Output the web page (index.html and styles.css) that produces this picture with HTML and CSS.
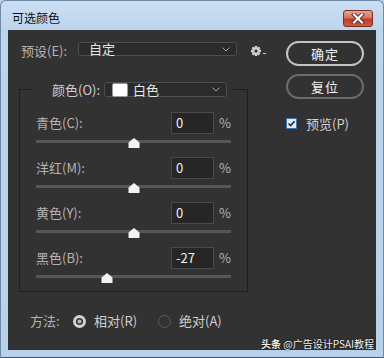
FILE: index.html
```html
<!DOCTYPE html>
<html lang="zh-CN">
<head>
<meta charset="utf-8">
<title>可选颜色</title>
<link rel="stylesheet" href="styles.css">
</head>
<body>
<div class="window">
  <div class="titlebar">
    <span class="title">可选颜色</span>
    <span class="close">
      <svg width="14" height="11" viewBox="0 0 14 11">
        <path d="M3 1.5 L11 9.5 M11 1.5 L3 9.5" stroke="#5a2a24" stroke-width="4" stroke-linecap="square"/>
        <path d="M3 1.5 L11 9.5 M11 1.5 L3 9.5" stroke="#ffffff" stroke-width="2.2" stroke-linecap="square"/>
      </svg>
    </span>
  </div>
  <div class="client">
    <div class="main">
      <div class="preset-row">
        <span class="preset-lbl">预设(E):</span>
        <div class="select preset-select">
          <span class="sel-text">自定</span>
          <svg class="chev" width="8" height="5" viewBox="0 0 8 5"><path d="M0.5 0.5 L4 4 L7.5 0.5" fill="none" stroke="#a8a8a8" stroke-width="1"/></svg>
        </div>
        <svg class="gear" width="16" height="12" viewBox="0 0 16 12">
          <g transform="translate(5,6)" fill="#cfcfcf">
            <circle r="3.7"/>
            <rect x="-1.2" y="-5" width="2.4" height="10"/>
            <rect x="-1.2" y="-5" width="2.4" height="10" transform="rotate(45)"/>
            <rect x="-1.2" y="-5" width="2.4" height="10" transform="rotate(90)"/>
            <rect x="-1.2" y="-5" width="2.4" height="10" transform="rotate(135)"/>
            <circle r="1.6" fill="#323232"/>
          </g>
          <rect x="12" y="8" width="3" height="1" fill="#cfcfcf"/>
        </svg>
      </div>

      <fieldset class="group">
        <legend>
          <div class="legend-in">
            <span class="legend-lbl">颜色(O):</span>
            <div class="select color-select">
              <span class="swatch"></span>
              <span class="sel-text">白色</span>
              <svg class="chev" width="8" height="5" viewBox="0 0 8 5"><path d="M0.5 0.5 L4 4 L7.5 0.5" fill="none" stroke="#a8a8a8" stroke-width="1"/></svg>
            </div>
          </div>
        </legend>

        <div class="row">
          <span class="row-lbl">青色(C):</span>
          <span class="num">0</span>
          <span class="pct">%</span>
        </div>
        <div class="track"><svg class="thumb" style="left:50%" width="12" height="10" viewBox="0 0 12 10"><polygon points="6,0 11.5,4.5 11.5,10 0.5,10 0.5,4.5" fill="#f2f2f2"/></svg></div>

        <div class="row">
          <span class="row-lbl">洋红(M):</span>
          <span class="num">0</span>
          <span class="pct">%</span>
        </div>
        <div class="track"><svg class="thumb" style="left:50%" width="12" height="10" viewBox="0 0 12 10"><polygon points="6,0 11.5,4.5 11.5,10 0.5,10 0.5,4.5" fill="#f2f2f2"/></svg></div>

        <div class="row">
          <span class="row-lbl">黄色(Y):</span>
          <span class="num">0</span>
          <span class="pct">%</span>
        </div>
        <div class="track"><svg class="thumb" style="left:50%" width="12" height="10" viewBox="0 0 12 10"><polygon points="6,0 11.5,4.5 11.5,10 0.5,10 0.5,4.5" fill="#f2f2f2"/></svg></div>

        <div class="row">
          <span class="row-lbl">黑色(B):</span>
          <span class="num">-27</span>
          <span class="pct">%</span>
        </div>
        <div class="track last"><svg class="thumb" style="left:36.5%" width="12" height="10" viewBox="0 0 12 10"><polygon points="6,0 11.5,4.5 11.5,10 0.5,10 0.5,4.5" fill="#f2f2f2"/></svg></div>
      </fieldset>

      <div class="method-row">
        <span class="method-lbl">方法:</span>
        <svg class="radio" width="13" height="13" viewBox="0 0 13 13">
          <circle cx="6.5" cy="6.5" r="6.5" fill="#d4d4d4"/>
          <circle cx="6.5" cy="6.5" r="3.6" fill="#343434"/>
          <circle cx="6.5" cy="6.5" r="2" fill="#bcbcbc"/>
        </svg>
        <span class="radio-lbl first">相对(R)</span>
        <svg class="radio" width="13" height="13" viewBox="0 0 13 13">
          <circle cx="6.5" cy="6.5" r="6" fill="none" stroke="#5c5c5c" stroke-width="1"/>
        </svg>
        <span class="radio-lbl">绝对(A)</span>
      </div>
    </div>

    <div class="side">
      <div class="btn primary">确定</div>
      <div class="btn secondary">复位</div>
      <div class="check-row">
        <svg class="check" width="11" height="11" viewBox="0 0 11 11">
          <rect x="0.5" y="0.5" width="10" height="10" fill="#dfe8f3" stroke="#3b78b8"/>
          <path d="M2.5 5.5 L4.6 7.6 L8.6 3.2" fill="none" stroke="#1f2a36" stroke-width="1.6"/>
        </svg>
        <span class="check-lbl">预览(P)</span>
      </div>
    </div>

    <div class="watermark"><b>头条</b> @广告设计PSAI教程</div>
  </div>
</div>
</body>
</html>
```

FILE: styles.css
```css
* {
  box-sizing: border-box;
}

body {
  margin: 0;
  background: #b9d1ea;
  font-family: "Noto Sans CJK SC", "Noto Sans", sans-serif;
}

.window {
  width: 384px;
  height: 358px;
  border: 1px solid #6f8aa8;
  border-bottom-color: #3c5670;
  border-radius: 6px 6px 0 0;
  background: linear-gradient(180deg, #cbdff3 0, #bcd4ec 30px, #b9d1ea 100%);
  display: flex;
  flex-direction: column;
}

.titlebar {
  height: 29px;
  display: flex;
  justify-content: space-between;
  align-items: flex-start;
  padding: 0 10px 0 11px;
}

.title {
  font-size: 12px;
  line-height: 14px;
  margin-top: 10px;
  color: #111;
}

.close {
  width: 30px;
  height: 17px;
  margin-top: 9px;
  border: 1px solid #7a2d22;
  border-radius: 3px;
  background: linear-gradient(180deg, #e8a594 0, #d5725c 45%, #bf3e25 55%, #cc5a40 100%);
  display: flex;
  align-items: center;
  justify-content: center;
}

.client {
  margin: 0 7px;
  height: 320px;
  background: #323232;
  display: flex;
  position: relative;
  color: #b4b4b4;
  font-size: 13px;
}

.main {
  width: 278px;
  flex: none;
}

/* preset row */
.preset-row {
  margin-top: 12px;
  height: 14px;
  display: flex;
  align-items: flex-start;
}

.preset-lbl {
  width: 57px;
  margin-left: 13px;
  margin-top: 1px;
  line-height: 16px;
  flex: none;
}

.select {
  display: flex;
  align-items: center;
  border: 1px solid #4e4e4e;
  border-radius: 3px;
  background: #2b2b2b;
  color: #e6e6e6;
  font-size: 13px;
  flex: none;
}

.preset-select {
  width: 159px;
  height: 14px;
  padding: 0 6px 0 10px;
}

.sel-text {
  line-height: 12px;
  flex: 1;
}

.chev {
  flex: none;
}

.gear {
  flex: none;
  margin: 3px 0 0 14px;
}

/* group box */
.group {
  margin: 26px 0 0 11px;
  width: 229px;
  min-width: 0;
  padding: 15px 0 13px 12px;
  border: 1px solid #1e1e1e;
}

.group legend {
  padding: 0 5px 0 20px;
  margin: 0;
}

.legend-in {
  display: flex;
  align-items: center;
  height: 15px;
}

.legend-lbl {
  width: 52px;
  line-height: 16px;
  color: #d0d0d0;
  flex: none;
}

.color-select {
  width: 123px;
  height: 15px;
  padding: 0 6px 0 7px;
}

.swatch {
  width: 16px;
  height: 14px;
  background: #ffffff;
  border: 1px solid #9a9a9a;
  border-radius: 2px;
  margin-right: 5px;
  flex: none;
}

.row {
  display: flex;
  align-items: center;
  height: 22px;
  margin-left: 4px;
}

.row-lbl {
  width: 135px;
  line-height: 16px;
  flex: none;
}

.num {
  width: 43px;
  height: 22px;
  border: 1px solid #4a4a4a;
  background: #262626;
  color: #f0f0f0;
  padding-left: 4px;
  line-height: 20px;
  font-size: 13px;
  flex: none;
}

.pct {
  margin-left: 5px;
  line-height: 16px;
}

.track {
  position: relative;
  width: 195px;
  height: 3px;
  margin: 6px 0 14px 4px;
  background: #565656;
}

.track.last {
  margin-bottom: 0;
}

.thumb {
  position: absolute;
  top: -2px;
  margin-left: -6px;
}

/* method row */
.method-row {
  margin: 21px 0 0 22px;
  height: 16px;
  display: flex;
  align-items: center;
}

.method-lbl {
  width: 43px;
  line-height: 16px;
  flex: none;
}

.radio {
  flex: none;
}

.radio-lbl {
  margin-left: 8px;
  line-height: 16px;
  color: #cfcfcf;
}

.radio-lbl.first {
  width: 64px;
}

/* side column */
.side {
  width: 78px;
  flex: none;
  padding-top: 11px;
}

.btn {
  height: 25px;
  border-radius: 13px;
  display: flex;
  align-items: center;
  justify-content: center;
  color: #f2f2f2;
  font-size: 13px;
  letter-spacing: 1px;
}

.btn.primary {
  border: 2px solid #c4c4c4;
}

.btn.secondary {
  margin-top: 8px;
  border: 2px solid #6c6c6c;
}

.check-row {
  margin-top: 19px;
  display: flex;
  align-items: center;
  height: 11px;
}

.check {
  flex: none;
}

.check-lbl {
  margin-left: 9px;
  line-height: 16px;
  color: #d0d0d0;
}

.watermark {
  position: absolute;
  right: 2px;
  bottom: -1px;
  font-size: 10px;
  line-height: 14px;
  color: #f2f2f2;
  text-shadow: 0 0 2px #000;
}

.watermark b {
  font-weight: 700;
}
```
